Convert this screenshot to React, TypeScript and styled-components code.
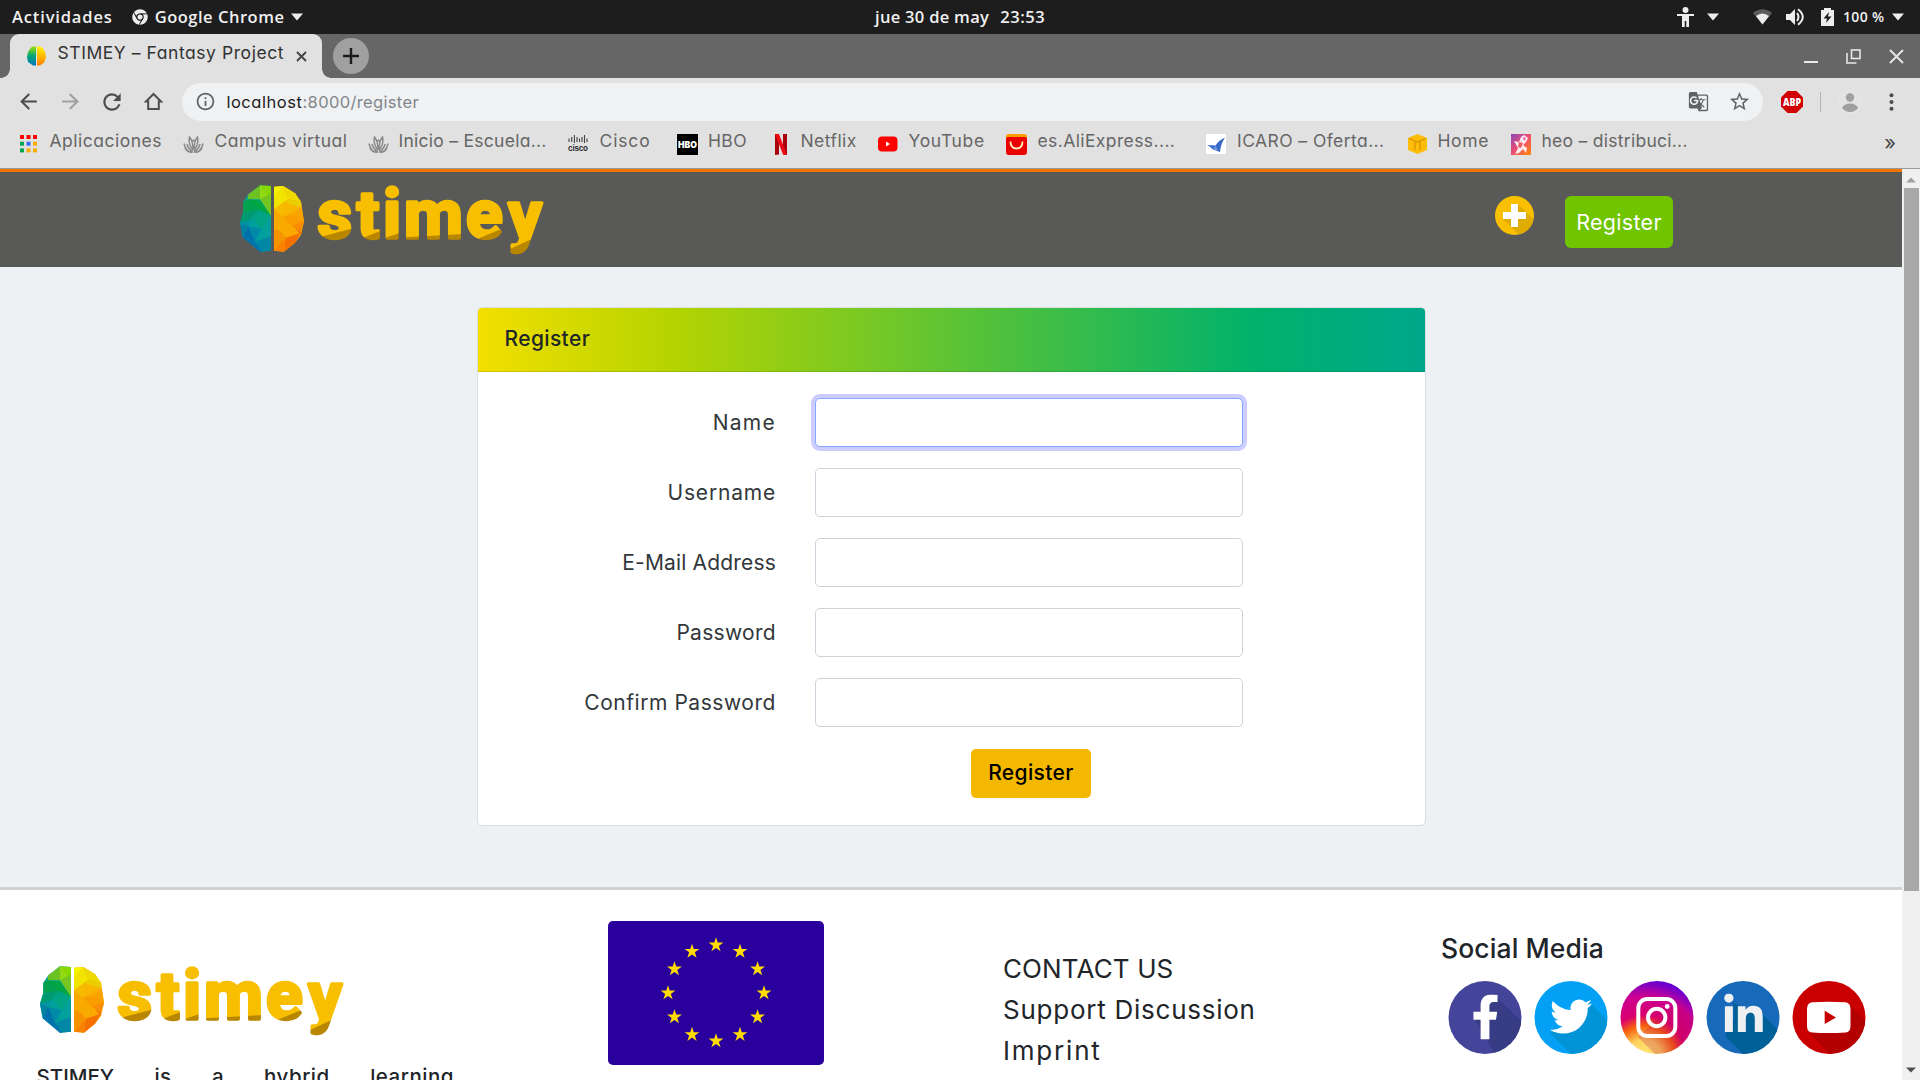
import React from 'react';
import styled, { createGlobalStyle } from 'styled-components';
import { FaChrome, FaFacebookF, FaTwitter, FaLinkedinIn } from 'react-icons/fa';
import { MdArrowBack, MdArrowForward, MdRefresh, MdInfoOutline, MdGTranslate, MdStarBorder } from 'react-icons/md';

const GlobalStyle = createGlobalStyle`
  * { box-sizing: border-box; }
  body { margin: 0; overflow: hidden; background: #fff; font-family: Inter, "Liberation Sans", sans-serif; }
  svg { display: block; flex: none; }
`;

const Screen = styled.div`
  width: 1920px;
  height: 1080px;
  display: flex;
  flex-direction: column;
  overflow: hidden;
`;

const Text = styled.span<{ $ls?: number }>`
  letter-spacing: ${(p) => p.$ls ?? 0}px;
  white-space: pre;
`;

/* ---------- desktop bar ---------- */
const DesktopBar = styled.div`
  height: 34px;
  flex: none;
  display: grid;
  grid-template-columns: 875px 1fr auto;
  align-items: center;
  background: #1d1d1d;
  color: #f0f0f0;
  font: 600 16.5px/34px "Open Sans", sans-serif;
  padding-right: 16px;
`;
const BarLeft = styled.div`
  display: flex;
  align-items: center;
  padding-left: 12px;
`;
const AppMenu = styled.div`
  display: flex;
  align-items: center;
  gap: 7px;
  margin-left: 19px;
`;
const Tray = styled.div`
  display: flex;
  align-items: center;
`;
const Clock = styled.div`
  display: flex;
  gap: 11px;
`;
const Gap = styled.div<{ $w: number }>`
  width: ${(p) => p.$w}px;
  flex: none;
`;
const Percent = styled.span`
  width: 43px;
  font-size: 14px;
  letter-spacing: 0.35px;
  white-space: pre;
`;

const Caret = () => (
  <svg width="12" height="8" viewBox="0 0 12 8"><path d="M0 .5h12L6 7.5z" fill="#eee" /></svg>
);

/* ---------- tab strip ---------- */
const TabStrip = styled.div`
  height: 44px;
  flex: none;
  display: flex;
  background: #666;
`;
const Tab = styled.div`
  position: relative;
  width: 312px;
  margin-left: 10px;
  display: flex;
  align-items: center;
  padding: 0 15px 0 17px;
  background: #e1e1e1;
  border-radius: 9px 9px 0 0;
  color: #333;
  font-size: 17.5px;
  font-feature-settings: "cv11";
  &::before, &::after {
    content: "";
    position: absolute;
    bottom: 0;
    width: 9px;
    height: 9px;
  }
  &::before { left: -9px; background: radial-gradient(circle at 0 0, transparent 8.5px, #e1e1e1 9px); }
  &::after { right: -9px; background: radial-gradient(circle at 100% 0, transparent 8.5px, #e1e1e1 9px); }
`;
const TabTitle = styled(Text)`
  margin: 0 auto 7px 11.5px;
  line-height: 24px;
`;
const NewTab = styled.div`
  width: 36px;
  height: 36px;
  margin: 4px 0 0 11px;
  border-radius: 50%;
  background: #a0a0a0;
  display: grid;
  place-items: center;
`;
const WindowButtons = styled.div`
  display: flex;
  align-items: center;
  gap: 28px;
  margin: 0 16px 0 auto;
`;

/* ---------- toolbar ---------- */
const Toolbar = styled.div`
  height: 47px;
  flex: none;
  display: flex;
  align-items: center;
  padding: 0 18px 0 16px;
  background: #e1e1e1;
  color: #4d4d4f;
`;
const NavIcons = styled.div`
  display: grid;
  grid-template-columns: repeat(4, 41.6px);
  align-items: center;
`;
const Address = styled.div`
  flex: none;
  width: 1581px;
  height: 38px;
  border-radius: 19px;
  background: #f0f1f3;
  display: flex;
  align-items: center;
  padding: 0 12px 0 13px;
  color: #5f6368;
`;
const Url = styled.div`
  flex: 1;
  margin-left: 10px;
  font-size: 16.5px;
  color: #80868b;
  font-feature-settings: "cv11";
  b { color: #202124; font-weight: 400; letter-spacing: 0.55px; }
`;
const Divider = styled.div`
  width: 1px;
  height: 20px;
  background: #b5b5b5;
`;

/* ---------- bookmarks ---------- */
const Bookmarks = styled.div`
  height: 44px;
  flex: none;
  display: flex;
  padding-left: 20px;
  background: #e1e1e1;
  border-bottom: 1px solid #999;
  color: #666;
  font-size: 17.5px;
  font-feature-settings: "cv11";
`;
const Bookmark = styled.div<{ $w: number; $text: number }>`
  flex: none;
  width: ${(p) => p.$w}px;
  display: grid;
  grid-template-columns: ${(p) => p.$text}px 1fr;
  height: 38px;
  align-items: center;
`;
const BookmarkName = styled(Text)`
  margin-bottom: 6px;
  line-height: 24px;
`;
const More = styled.div`
  margin: 6px 24px 0 auto;
  font-size: 20px;
  line-height: 24px;
  color: #444;
`;

/* ---------- page ---------- */
const Viewport = styled.div`
  flex: 1;
  min-height: 0;
  display: flex;
`;
const Page = styled.div`
  width: 1902px;
  height: 911px;
  overflow: hidden;
  display: flex;
  flex-direction: column;
  background: #edf1f4;
  color: #212529;
`;
const Scrollbar = styled.div`
  width: 18px;
  background: #f0f0f0;
  display: flex;
  flex-direction: column;
  align-items: center;
  padding: 8px 0 7px;
`;
const Thumb = styled.div`
  width: 15px;
  height: 703px;
  margin: 5px 0 auto 1px;
  background: #a8a8a8;
`;
const SiteHeader = styled.header`
  height: 98px;
  flex: none;
  border-top: 3px solid #f07400;
  background: #595957;
  display: flex;
  align-items: flex-start;
  padding: 8px 229px 0 236px;
`;
const HeaderActions = styled.div`
  display: flex;
  align-items: flex-start;
  gap: 31px;
  margin: 16px 0 0 auto;
`;
const RegisterLink = styled.a`
  width: 108px;
  height: 52px;
  border-radius: 6px;
  background: #70c400;
  color: #fff;
  font-size: 21.5px;
  line-height: 52px;
  text-align: center;
  letter-spacing: 0.3px;
`;
const Main = styled.main`
  flex: none;
  height: 620px;
  padding: 40px 0 0 477px;
`;
const Card = styled.section`
  width: 948.5px;
  height: 518.5px;
  border: 1px solid #dadddf;
  border-radius: 5px;
  background: #fff;
  overflow: hidden;
`;
const CardHeader = styled.div`
  height: 64px;
  padding-left: 26.5px;
  border-bottom: 1px solid rgba(0, 0, 0, 0.12);
  background: linear-gradient(90deg, #f3df00, #b6d400 20%, #00b26b 82%, #00a78c);
  font-size: 21px;
  font-weight: 500;
  line-height: 61px;
`;
const Form = styled.form`
  padding-top: 26px;
  display: grid;
  grid-template-columns: 298px 428px;
  column-gap: 39px;
  row-gap: 20.6px;
`;
const Label = styled.label<{ $ls: number }>`
  font-size: 21px;
  line-height: 49.4px;
  text-align: right;
  color: #32373b;
  letter-spacing: ${(p) => p.$ls}px;
`;
const Input = styled.input<{ $focused: boolean }>`
  width: 428px;
  height: 49.4px;
  border: 1px solid ${(p) => (p.$focused ? '#80a9ff' : '#ccd2da')};
  border-radius: 5px;
  background: #fff;
  outline: none;
  box-shadow: ${(p) => (p.$focused ? '0 0 0 4px #ccccff' : 'none')};
`;
const Submit = styled.button`
  grid-column: 2;
  width: 120px;
  height: 49px;
  margin: 1px 0 0 156px;
  padding: 0 0 2px;
  border: 0;
  border-radius: 5px;
  background: #f5b800;
  color: #000;
  font: 500 21px/46px Inter, sans-serif;
  letter-spacing: 0.37px;
`;

/* ---------- footer ---------- */
const Footer = styled.footer`
  flex: none;
  height: 193px;
  border-top: 3px solid #cfd2d4;
  background: #fff;
  display: grid;
  grid-template-columns: 572px 395px 438px 1fr;
  padding-left: 36px;
  overflow: hidden;
`;
const About = styled.div`
  padding-top: 71px;
`;
const AboutText = styled.div`
  width: 417.5px;
  margin: 26px 0 0 0.5px;
  display: flex;
  justify-content: space-between;
  font-size: 20.5px;
  font-weight: 500;
  line-height: 27px;
`;
const FlagWrap = styled.div`
  padding-top: 31px;
`;
const Links = styled.div`
  display: flex;
  flex-direction: column;
  padding-top: 58px;
  font-size: 26px;
  line-height: 41px;
`;
const SocialTitle = styled.h3`
  margin: 0;
  padding-top: 38px;
  font-size: 26.5px;
  font-weight: 500;
  line-height: 40px;
  letter-spacing: 0.1px;
`;
const SocialRow = styled.div`
  display: flex;
  gap: 12.2px;
  margin: 13px 0 0 6.5px;
`;
const LogoSvg = styled.svg`
  overflow: visible;
`;

const MiniBrain = () => (
  <svg width="19" height="20" viewBox="0 0 19 20">
    <defs>
      <linearGradient id="mbl" x2="0" y2="1"><stop stopColor="#9ae000" /><stop offset=".5" stopColor="#00a578" /><stop offset="1" stopColor="#0078c0" /></linearGradient>
      <linearGradient id="mbr" x2="0" y2="1"><stop stopColor="#fff000" /><stop offset=".6" stopColor="#ffb000" /><stop offset="1" stopColor="#ff7a00" /></linearGradient>
    </defs>
    <path d="M9 .5v19H6L1 16 0 11l1-5 3-4.500L6 .5z" fill="url(#mbl)" />
    <path d="M10 .5v19h3l4-3 2-5-1-6-3-4-2-1z" fill="url(#mbr)" />
  </svg>
);

const FACETS: [string, string][] = [
  ['180,76 213,78 213,272 180,275 128,232 120,188 130,155 130,125 145,103', '#00a09c'],
  ['180,76 213,78 213,110 180,118', '#86d600'],
  ['180,76 213,118 180,118', '#93d916'],
  ['180,76 145,103 143,118 180,118', '#6cc223'],
  ['180,118 213,100 213,168', '#74c51f'],
  ['143,118 180,122 213,168 180,152', '#00a63f'],
  ['143,118 130,125 130,157 180,150', '#00a24f'],
  ['130,157 180,150 155,178 120,188', '#009a72'],
  ['180,150 213,168 185,208 155,170', '#00a383'],
  ['120,188 155,178 145,198', '#0095a0'],
  ['120,188 145,198 128,232', '#0083a3'],
  ['145,198 185,208 165,245', '#008aa8'],
  ['128,232 145,198 165,245', '#0070ab'],
  ['165,245 213,228 213,272 180,275', '#0087a6'],
  ['128,232 165,245 186,275 180,275', '#0073ae'],
  ['222,80 250,78 285,100 303,125 312,185 303,225 285,248 252,275 222,272', '#f9a900'],
  ['222,80 250,78 222,115', '#f4f400'],
  ['250,78 265,118 222,148 222,115', '#f0e400'],
  ['250,78 285,100 303,125 265,118', '#eed900'],
  ['265,118 303,125 305,142 255,130', '#ecce00'],
  ['222,148 255,128 250,170', '#f6bd00'],
  ['255,128 305,142 250,170', '#f8b600'],
  ['305,142 312,185 280,165', '#f9a200'],
  ['250,170 280,165 312,185 275,197', '#f99c00'],
  ['275,197 312,185 303,215', '#f98b00'],
  ['222,208 240,212 257,233 222,272', '#f79300'],
  ['257,233 303,218 285,248 252,275', '#f67000'],
  ['285,205 303,215 303,225', '#f46c00'],
  ['222,272 257,233 252,275', '#f98200'],
];

type Letter = { ch: string; x: number; size: number; shade: [number, number, number, number] };
const LETTERS: Letter[] = [
  { ch: 's', x: 352, size: 204, shade: [397, 201, 407, 239] },
  { ch: 't', x: 470, size: 202, shade: [503, 207, 517, 243] },
  { ch: 'i', x: 549, size: 206, shade: [569, 209, 581, 245] },
  { ch: 'm', x: 612, size: 204, shade: [700, 209, 702, 245] },
  { ch: 'e', x: 798, size: 204, shade: [855, 205, 871, 243] },
  { ch: 'y', x: 925, size: 201, shade: [955, 233, 972, 270] },
];

function Logo({ id }: { id: string }) {
  return (
    <LogoSvg width="314" height="76" viewBox="108 60 942 228">
      <defs>
        {LETTERS.map((l) => (
          <linearGradient key={l.ch} id={id + l.ch} gradientUnits="userSpaceOnUse" x1={l.shade[0]} y1={l.shade[1]} x2={l.shade[2]} y2={l.shade[3]}>
            <stop offset=".46" stopColor="#f7bf00" />
            <stop offset=".54" stopColor="#b98600" />
          </linearGradient>
        ))}
      </defs>
      {FACETS.map(([pts, c], i) => <polygon key={i} points={pts} fill={c} />)}
      <g fontFamily="Roboto, sans-serif" fontWeight="700" strokeWidth="10" strokeLinejoin="round">
        {LETTERS.map((l) => (
          <text key={l.ch} x={l.x} y="233" fontSize={l.size} fill={`url(#${id + l.ch})`} stroke={`url(#${id + l.ch})`}>{l.ch}</text>
        ))}
      </g>
    </LogoSvg>
  );
}

const starPoints = (cx: number, cy: number, r: number) =>
  Array.from({ length: 10 }, (_, i) => {
    const a = (Math.PI * i) / 5 - Math.PI / 2;
    const q = i % 2 ? r * 0.382 : r;
    return `${(cx + q * Math.cos(a)).toFixed(2)},${(cy + q * Math.sin(a)).toFixed(2)}`;
  }).join(' ');

const Flag = () => (
  <svg width="216" height="144" viewBox="0 0 216 144">
    <rect width="216" height="144" rx="5" fill="#2a009c" />
    {Array.from({ length: 12 }, (_, i) => {
      const a = (Math.PI * i) / 6;
      return <polygon key={i} points={starPoints(108 + 48 * Math.sin(a), 72 - 48 * Math.cos(a), 7.8)} fill="#ffdc00" />;
    })}
  </svg>
);

const Disc = ({ id, fill, shade, shadow, children }: { id: string; fill: string; shade: string; shadow: string; children: React.ReactNode }) => (
  <svg width="74" height="74" viewBox="0 0 74 74">
    <clipPath id={id}><circle cx="37" cy="36.500" r="36.500" /></clipPath>
    <g clipPath={`url(#${id})`}>
      <rect width="74" height="74" fill={fill} />
      <path d={shadow} fill={shade} />
    </g>
    {children}
  </svg>
);

const Social = () => (
  <SocialRow>
    <Disc id="fb" fill="#44449b" shade="#373c85" shadow="M48 15 80 47V80H51L26 37l8-2z"><FaFacebookF x={15} y={13.5} size={45} color="#fff" /></Disc>
    <Disc id="tw" fill="#03a0f5" shade="#0093d6" shadow="M56 22 84 50V84H48L16 52l20-10z"><FaTwitter x={16} y={14.5} size={42} color="#fff" /></Disc>
    <svg width="74" height="74" viewBox="0 0 74 74">
      <defs>
        <radialGradient id="ig" gradientUnits="userSpaceOnUse" cx="24" cy="76" r="78">
          <stop offset=".08" stopColor="#ffe070" /><stop offset=".22" stopColor="#fdd25c" /><stop offset=".4" stopColor="#f8600c" /><stop offset=".54" stopColor="#d8006e" /><stop offset=".78" stopColor="#cc0090" /><stop offset="1" stopColor="#5f00d8" />
        </radialGradient>
        <clipPath id="igc"><circle cx="37" cy="36.500" r="36.500" /></clipPath>
      </defs>
      <g clipPath="url(#igc)">
        <rect width="74" height="74" fill="url(#ig)" />
        <path d="M56 20 84 48V84H46L18 56z" fill="#b0005a" opacity=".22" />
      </g>
      <g fill="none" stroke="#fff" strokeWidth="4">
        <rect x="18.300" y="18" width="37" height="37" rx="9" />
        <circle cx="36.700" cy="36.500" r="8.700" />
      </g>
      <circle cx="47.200" cy="25.500" r="2.400" fill="#fff" />
    </svg>
    <Disc id="li" fill="#1769ba" shade="#006199" shadow="M27 21 42 30 55 32 84 61V84H48L19 55l9-18z"><FaLinkedinIn x={15.5} y={12.5} size={44} color="#eef0f2" /></Disc>
    <Disc id="yt" fill="#ca0000" shade="#b30000" shadow="M58 24 84 50V84H48L17 51z">
      <path d="M20 21.300Q36.700 20 53.500 21.300 58.500 22 58.500 28V45Q58.500 51 53.500 51.500 36.700 52.600 20 51.500 15 51 15 45V28Q15 22 20 21.300z" fill="#fff" />
      <path d="M32.700 29.800 44 36.500 32.700 43z" fill="#ca0000" />
    </Disc>
  </SocialRow>
);

/* ---------- bookmark icons ---------- */
const AppsIcon = () => {
  const colors = ['#f00', '#f00', '#f00', '#00a650', '#3f6ff0', '#f9ab00', '#00a650', '#f9ab00', '#f9ab00'];
  return (
    <svg width="18" height="18" viewBox="0 0 18 18">
      {colors.map((c, i) => <rect key={i} x={(i % 3) * 6.5} y={Math.floor(i / 3) * 6.7} width="4" height="4" fill={c} />)}
    </svg>
  );
};
const LotusIcon = () => (
  <svg width="21" height="18" viewBox="0 0 21 18" fill="none" stroke="#8c8c8c" strokeWidth="1.500">
    <path d="M10 16.500Q3 18 1 8.500M10 16.500Q5 14 4 9M10 15Q5 9 6.500 2 10 6 10 15M11 15Q16 9 14.500 2 11 6 11 15M11 16.500Q18 18 20 8.500M11 16.500Q16 14 17 9M2 13q3 5 8 4M19 13q-3 5-8 4M8.500 7l2-2 2 2" />
  </svg>
);
const CiscoIcon = () => (
  <svg width="20" height="18" viewBox="0 0 20 18">
    <path d="M1 3.500V7M3.700 2V7M6.400 0V8M9 2V7M11.500 3.500V7M14 2V7M16.500 0V8M19 3.500V7" stroke="#444" strokeWidth="1.100" />
    <text x="0" y="15.500" textLength="20" fontFamily="Inter, sans-serif" fontSize="8" fontWeight="700" fill="#333">cisco</text>
  </svg>
);
const HboIcon = () => (
  <svg width="21" height="21" viewBox="0 0 21 21">
    <rect width="21" height="21" />
    <text x="1" y="14" textLength="19" lengthAdjust="spacingAndGlyphs" fontFamily="Inter, sans-serif" fontSize="9.500" fontWeight="900" fill="#fff">HBO</text>
  </svg>
);
const NetflixIcon = () => (
  <svg width="14" height="21" viewBox="0 0 14 21">
    <path d="M1 0h4v20.500L1 21zM9 0h4v21l-4-.5z" fill="#a9000b" /><path d="M1 0h4l8 21-4-.5z" fill="#ee0912" />
  </svg>
);
const YoutubeIcon = () => (
  <svg width="20" height="16" viewBox="0 0 20 16"><rect y=".5" width="19.500" height="15" rx="4" fill="#f00" /><path d="M8 5.500v5l4-2.500z" fill="#fff" /></svg>
);
const AliIcon = () => (
  <svg width="21" height="21" viewBox="0 0 21 21">
    <rect width="21" height="12" rx="3" fill="#ff9c00" /><path d="M0 5q0-2 2-2h17q2 0 2 2v13q0 3-3 3H3q-3 0-3-3z" fill="#ea0000" />
    <path d="M4.500 7.500q0 7 6 7t6-7" fill="none" stroke="#fff3c0" strokeWidth="1.800" />
  </svg>
);
const IcaroIcon = () => (
  <svg width="20" height="20" viewBox="0 0 20 20"><rect width="20" height="20" fill="#fff" /><path d="M19 3.500Q13 6 9.500 11.500L1 11q3 1 6 4.500l7 2.500Q15 9 19 3.500z" fill="#3868c8" /><path d="M9.500 11.500 7 15.500l5 1z" fill="#6f95e4" /></svg>
);
const HomeCube = () => (
  <svg width="19" height="20" viewBox="0 0 19 20"><path d="M0 4 9.500 0 19 4v12l-9.500 4L0 16z" fill="#fdbd08" /><path d="M1 4.500 9.500 8 18 4.500M7 8v8M12 8v8" stroke="#d59200" fill="none" strokeWidth="1.200" /></svg>
);
const HeoIcon = () => (
  <svg width="20" height="21" viewBox="0 0 20 21">
    <defs><linearGradient id="heo" x2="1" y2="1"><stop stopColor="#8b45b8" /><stop offset=".5" stopColor="#f05070" /><stop offset="1" stopColor="#ff8800" /></linearGradient></defs>
    <rect width="20" height="21" fill="url(#heo)" />
    <path d="M3 7l5 1 2-5 3-2 4 3-2 4-3 3 4 3-1 5-3-4-4 4-4 1 3-6z" fill="#fff" opacity=".88" /><path d="M8 8l4 1-2 5-3-1z" fill="#f05a60" /><path d="M12 3l3 1-2 3z" fill="#d8559a" />
  </svg>
);

const BOOKMARKS: { name: string; w: number; text: number; ls: number; icon: React.ReactNode }[] = [
  { name: 'Aplicaciones', w: 163, text: 29.5, ls: 0.5, icon: <AppsIcon /> },
  { name: 'Campus virtual', w: 185, text: 31.5, ls: 0.5, icon: <LotusIcon /> },
  { name: 'Inicio – Escuela...', w: 200, text: 30.5, ls: 0.27, icon: <LotusIcon /> },
  { name: 'Cisco', w: 109, text: 31.5, ls: 0.85, icon: <CiscoIcon /> },
  { name: 'HBO', w: 97, text: 31, ls: 0.35, icon: <HboIcon /> },
  { name: 'Netflix', w: 104, text: 26.5, ls: 0.43, icon: <NetflixIcon /> },
  { name: 'YouTube', w: 128, text: 30.5, ls: 0.65, icon: <YoutubeIcon /> },
  { name: 'es.AliExpress....', w: 200, text: 31.5, ls: 0.4, icon: <AliIcon /> },
  { name: 'ICARO – Oferta...', w: 202, text: 31, ls: 0.43, icon: <IcaroIcon /> },
  { name: 'Home', w: 103, text: 29.5, ls: 0.6, icon: <HomeCube /> },
  { name: 'heo – distribuci...', w: 200, text: 30.5, ls: 0.27, icon: <HeoIcon /> },
];

const FIELDS = [
  { label: 'Name', ls: 1.25 },
  { label: 'Username', ls: 0.8 },
  { label: 'E-Mail Address', ls: 0.17 },
  { label: 'Password', ls: 0.3 },
  { label: 'Confirm Password', ls: 0.55 },
];

export default function App() {
  return (
    <Screen>
      <GlobalStyle />
      <DesktopBar>
        <BarLeft>
          <Text $ls={0.85}>Actividades</Text>
          <AppMenu>
            <FaChrome size={16} color="#eee" />
            <Text $ls={0.52}>Google Chrome</Text>
            <Caret />
          </AppMenu>
        </BarLeft>
        <Clock><Text $ls={0.3}>jue 30 de may</Text><Text $ls={0.6}>23:53</Text></Clock>
        <Tray>
          <svg width="17" height="20" viewBox="0 0 17 20" fill="#eee"><circle cx="8.500" cy="3" r="3" /><path d="M0 7h17v2h-5v11H9.300v-6H7.700v6H5V9H0z" /></svg>
          <Gap $w={13} /><Caret /><Gap $w={34} />
          <svg width="19" height="16" viewBox="0 0 19 16"><path d="M0 4Q9.500-3.500 19 4L9.500 15.500z" fill="#5c5c5c" /><path d="M3 7Q9.500 2 16 7L9.500 15.500z" fill="#eee" /></svg>
          <Gap $w={14} />
          <svg width="19" height="18" viewBox="0 0 19 18"><path d="M0 6h4l5-5v16l-5-5H0z" fill="#eee" /><path d="M11 5q3 4 0 8M12 1.200q9.500 7.800 0 15.600" fill="none" stroke="#eee" strokeWidth="2" /></svg>
          <Gap $w={16} />
          <svg width="13" height="18" viewBox="0 0 13 18"><path d="M0 2h3V0h7v2h3v16H0z" fill="#eee" /><path d="M8 4 2.500 10.500H6L5 15l5.500-6.500H7z" fill="#1d1d1d" /></svg>
          <Gap $w={9} />
          <Percent>100 %</Percent>
          <Gap $w={6} /><Caret />
        </Tray>
      </DesktopBar>

      <TabStrip>
        <Tab>
          <MiniBrain />
          <TabTitle $ls={0.56}>STIMEY – Fantasy Project</TabTitle>
          <svg width="11" height="11" viewBox="0 0 11 11"><path d="M1 1l9 9M10 1l-9 9" stroke="#444" strokeWidth="1.900" /></svg>
        </Tab>
        <NewTab><svg width="16" height="16" viewBox="0 0 16 16"><path d="M8 0v16M0 8h16" stroke="#1c1c1c" strokeWidth="2.400" /></svg></NewTab>
        <WindowButtons>
          <svg width="14" height="14" viewBox="0 0 14 14"><path d="M0 13h14" stroke="#e8e8e8" strokeWidth="2" /></svg>
          <svg width="15" height="15" viewBox="0 0 15 15" fill="none" stroke="#e8e8e8" strokeWidth="1.600"><rect x="5.500" y="1" width="8.500" height="8.500" /><path d="M1 4v10h9.500" /></svg>
          <svg width="15" height="15" viewBox="0 0 15 15"><path d="M1 1l13 13M14 1 1 14" stroke="#e8e8e8" strokeWidth="1.900" /></svg>
        </WindowButtons>
      </TabStrip>

      <Toolbar>
        <NavIcons>
          <MdArrowBack size={25} />
          <MdArrowForward size={25} color="#a0a0a0" />
          <MdRefresh size={26} />
          <svg width="25" height="25" viewBox="0 0 25 25"><path d="M5 12.500h2.200v7.500h10.600v-7.500H20L12.500 5z" fill="none" stroke="#4d4d4f" strokeWidth="2" /></svg>
        </NavIcons>
        <Address>
          <MdInfoOutline size={21} />
          <Url><b>localhost</b><Text $ls={0.35}>:8000/register</Text></Url>
          <MdGTranslate size={21} />
          <Gap $w={19} />
          <MdStarBorder size={23} />
        </Address>
        <Gap $w={18} />
        <svg width="22" height="22" viewBox="0 0 22 22">
          <path d="M6.500 0h9L22 6.500v9L15.500 22h-9L0 15.500v-9z" fill="#d00000" />
          <text x="2" y="14.800" textLength="18" lengthAdjust="spacingAndGlyphs" fontFamily="Open Sans, sans-serif" fontSize="10.500" fontWeight="800" fill="#fff">ABP</text>
        </svg>
        <Gap $w={17} />
        <Divider />
        <Gap $w={17} />
        <svg width="24" height="24" viewBox="0 0 24 24"><circle cx="12" cy="12" r="11.500" fill="#e3e3e3" stroke="#eaeaea" strokeDasharray="2 1.500" /><circle cx="12" cy="7.500" r="4.200" fill="#a0a0a0" /><path d="M4 18q2-4.500 8-4.500t8 4.500q-3 4-8 4t-8-4z" fill="#a0a0a0" /></svg>
        <Gap $w={27} />
        <svg width="5" height="18" viewBox="0 0 5 18" fill="#4d4d4f"><circle cx="2.500" cy="2.200" r="2" /><circle cx="2.500" cy="9" r="2" /><circle cx="2.500" cy="15.800" r="2" /></svg>
      </Toolbar>

      <Bookmarks>
        {BOOKMARKS.map((b) => (
          <Bookmark key={b.name} $w={b.w} $text={b.text}>
            {b.icon}
            <BookmarkName $ls={b.ls}>{b.name}</BookmarkName>
          </Bookmark>
        ))}
        <More>»</More>
      </Bookmarks>

      <Viewport>
        <Page>
          <SiteHeader>
            <Logo id="top" />
            <HeaderActions>
              <svg width="39" height="39" viewBox="0 0 39 39">
                <clipPath id="pc"><circle cx="19.500" cy="19.500" r="19.500" /></clipPath>
                <g clipPath="url(#pc)"><rect width="39" height="39" fill="#f8c000" /><path d="M23 8 45 30V45H30L8 23z" fill="#e0ac00" /></g>
                <path d="M16 8h7v8h8v7h-8v8h-7v-8H8v-7h8z" fill="#fff" />
              </svg>
              <RegisterLink>Register</RegisterLink>
            </HeaderActions>
          </SiteHeader>
          <Main>
            <Card>
              <CardHeader><Text $ls={0.37}>Register</Text></CardHeader>
              <Form>
                {FIELDS.map((f, i) => (
                  <React.Fragment key={f.label}>
                    <Label $ls={f.ls}>{f.label}</Label>
                    <Input $focused={i === 0} />
                  </React.Fragment>
                ))}
                <Submit type="button">Register</Submit>
              </Form>
            </Card>
          </Main>
          <Footer>
            <About>
              <Logo id="foot" />
              <AboutText>
                <Text>STIMEY</Text><Text $ls={0.3}>is</Text><Text>a</Text><Text $ls={0.5}>hybrid</Text><Text $ls={0.5}>learning</Text>
              </AboutText>
            </About>
            <FlagWrap><Flag /></FlagWrap>
            <Links>
              <Text $ls={0.12}>CONTACT US</Text>
              <Text $ls={0.75}>Support Discussion</Text>
              <Text $ls={1.8}>Imprint</Text>
            </Links>
            <div>
              <SocialTitle>Social Media</SocialTitle>
              <Social />
            </div>
          </Footer>
        </Page>
        <Scrollbar>
          <svg width="10" height="6" viewBox="0 0 10 6"><path d="M0 5.500h10L5 .5z" fill="#a0a0a0" /></svg>
          <Thumb />
          <svg width="10" height="6" viewBox="0 0 10 6"><path d="M0 .5h10L5 5.500z" fill="#505050" /></svg>
        </Scrollbar>
      </Viewport>
    </Screen>
  );
}
